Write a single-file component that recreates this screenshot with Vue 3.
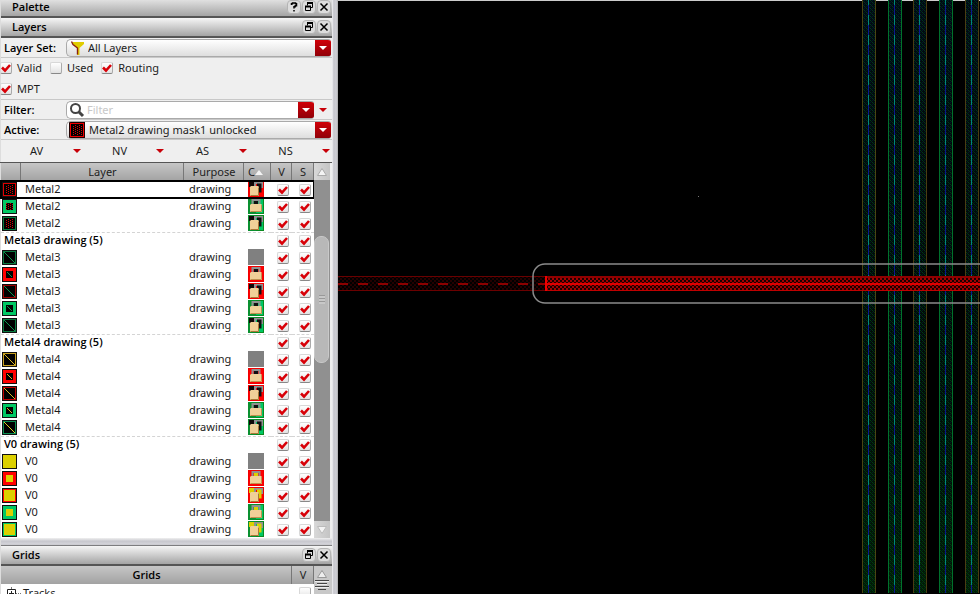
<script setup>
import { ref } from 'vue'

const RED = '#ff0000'
const GREEN = '#00c864'
const YELLOW = '#dcd000'

const filters = ref([
  { label: 'Valid', on: true },
  { label: 'Used', on: false },
  { label: 'Routing', on: true },
  { label: 'MPT', on: true }
])

const menus = ['AV', 'NV', 'AS', 'NS']

// frame: colour of the swatch frame, thick: wide frame, fill: dots, diag or solid
const rows = ref([
  { name: 'Metal2', frame: '#e00000', fill: 'dots', mask: RED, open: true, selected: true },
  { name: 'Metal2', frame: GREEN, thick: true, fill: 'dots', mask: GREEN },
  { name: 'Metal2', frame: '#0a7a40', fill: 'dots', mask: GREEN, open: true },
  { group: 'Metal3 drawing (5)' },
  { name: 'Metal3', frame: '#0a7a40', fill: 'diag', ink: '#0c9450' },
  { name: 'Metal3', frame: RED, thick: true, fill: 'diag', ink: '#0c9450', mask: RED },
  { name: 'Metal3', frame: '#a00000', fill: 'diag', ink: '#0c9450', mask: RED, open: true },
  { name: 'Metal3', frame: GREEN, thick: true, fill: 'diag', ink: '#0c9450', mask: GREEN },
  { name: 'Metal3', frame: '#0a7a40', fill: 'diag', ink: '#0c9450', mask: GREEN, open: true },
  { group: 'Metal4 drawing (5)' },
  { name: 'Metal4', frame: '#c8a020', fill: 'diag', ink: '#d8b828' },
  { name: 'Metal4', frame: RED, thick: true, fill: 'diag', ink: '#d8b828', mask: RED },
  { name: 'Metal4', frame: '#c00000', fill: 'diag', ink: '#d8b828', mask: RED, open: true },
  { name: 'Metal4', frame: GREEN, thick: true, fill: 'diag', ink: '#d8b828', mask: GREEN },
  { name: 'Metal4', frame: '#0a9050', fill: 'diag', ink: '#e0d020', mask: GREEN, open: true },
  { group: 'V0 drawing (5)' },
  { name: 'V0', frame: YELLOW, fill: 'solid', ink: YELLOW },
  { name: 'V0', frame: RED, thick: true, fill: 'solid', ink: YELLOW, mask: RED },
  { name: 'V0', frame: RED, fill: 'solid', ink: YELLOW, mask: RED, open: true },
  { name: 'V0', frame: GREEN, thick: true, fill: 'solid', ink: YELLOW, mask: GREEN },
  { name: 'V0', frame: GREEN, fill: 'solid', ink: YELLOW, mask: GREEN, open: true }
].map(r => ({ ...r, visible: true, selectable: true })))

const tracks = [
  { x: 524, edge: '#4a4412' },
  { x: 550, edge: '#00702c' },
  { x: 575, edge: '#4a3c12' },
  { x: 601, edge: '#00702c' },
  { x: 627, edge: '#4a3c12' }
]
</script>

<template>
  <div class="app">
    <svg class="defs" aria-hidden="true">
      <defs>
        <pattern id="swatch-dots" width="4" height="4" patternUnits="userSpaceOnUse">
          <path d="M0 0h1v1H0zM2 1h1v1H2zM0 2h1v1H0zM2 3h1v1H2z" fill="#d80000" />
        </pattern>
      </defs>
    </svg>

    <aside class="dock">
      <header class="title">
        <h2>Palette</h2>
        <button type="button" aria-label="Help">
          <svg viewBox="0 0 12 12"><path d="M3.500 4V2.800h1V2h3v.8h1v2H7.200v1H6V7.500M6 9v1.500" fill="none" stroke="#000" stroke-width="1.500" /></svg>
        </button>
        <button type="button" aria-label="Float">
          <svg viewBox="0 0 12 12"><path d="M4.500 4.500V2h5v4.500H8M2.500 5.500h5v4h-5z" fill="none" stroke="#000" /><path d="M4 1h6v2H4zM2 4.500h6v2H2z" /></svg>
        </button>
        <button type="button" aria-label="Close">
          <svg viewBox="0 0 12 12"><path d="M2.500 2.500l7 7M9.500 2.500l-7 7" stroke="#000" stroke-width="1.500" /></svg>
        </button>
      </header>

      <header class="title second">
        <h2>Layers</h2>
        <button type="button" aria-label="Float">
          <svg viewBox="0 0 12 12"><path d="M4.500 4.500V2h5v4.500H8M2.500 5.500h5v4h-5z" fill="none" stroke="#000" /><path d="M4 1h6v2H4zM2 4.500h6v2H2z" /></svg>
        </button>
        <button type="button" aria-label="Close">
          <svg viewBox="0 0 12 12"><path d="M2.500 2.500l7 7M9.500 2.500l-7 7" stroke="#000" stroke-width="1.500" /></svg>
        </button>
      </header>

      <div class="field">
        <label for="layer-set">Layer Set:</label>
        <div class="combo">
          <svg class="lead" viewBox="0 0 16 16"><path d="M3 2h12v2l-4.500 4v7H8V8L4 4z" fill="#e0cc00" /><path d="M2.500 1.500l1.500 3L8.500 8v6.500" fill="none" stroke="#8a2010" stroke-width="1.400" /></svg>
          <select id="layer-set"><option>All Layers</option></select>
          <span class="drop"></span>
        </div>
      </div>

      <div class="checks">
        <label v-for="f in filters" :key="f.label">
          <input v-model="f.on" type="checkbox" />{{ f.label }}
        </label>
      </div>

      <div class="field lined">
        <label for="filter">Filter:</label>
        <div class="combo search">
          <svg class="lead" viewBox="0 0 16 16"><circle cx="6.500" cy="6.500" r="4.500" fill="none" stroke="#444" stroke-width="2" /><path d="M9.500 9.500l4.500 4.500" stroke="#444" stroke-width="3" /></svg>
          <input id="filter" type="text" placeholder="Filter" />
          <button type="button" class="drop" aria-label="Filter history"></button>
        </div>
        <button type="button" class="more" aria-label="Filter options"><i class="tri"></i></button>
      </div>

      <div class="field">
        <label for="active">Active:</label>
        <div class="combo">
          <svg class="lead big" viewBox="0 0 16 16" shape-rendering="crispEdges"><rect width="16" height="16" fill="#200000" /><rect x="1" y="1" width="14" height="14" fill="#f00000" /><rect x="2" y="2" width="12" height="12" /><rect x="3" y="3" width="10" height="10" fill="url(#swatch-dots)" /></svg>
          <select id="active"><option>Metal2 drawing mask1 unlocked</option></select>
          <span class="drop"></span>
        </div>
      </div>

      <nav class="menus">
        <button v-for="m in menus" :key="m" type="button"><span>{{ m }}</span><i class="tri"></i></button>
      </nav>

      <section class="layers">
        <table>
          <colgroup>
            <col class="c-icon" /><col /><col class="c-purpose" /><col class="c-mask" /><col class="c-v" /><col class="c-s" />
          </colgroup>
          <thead>
            <tr>
              <th></th><th>Layer</th><th>Purpose</th>
              <th class="sorted"><span class="sort">C<svg viewBox="0 0 8 5"><path d="M0 5l4-5 4 5z" fill="#f4f4f4" /></svg></span></th>
              <th>V</th><th>S</th>
            </tr>
          </thead>
          <tbody>
            <tr v-for="(r, i) in rows" :key="i" :class="{ group: r.group, selected: r.selected }">
              <td v-if="r.group" colspan="4" class="group-name">{{ r.group }}</td>
              <template v-else>
                <td class="swatch">
                  <svg viewBox="0 0 15 15" shape-rendering="crispEdges">
                    <rect width="15" height="15" fill="#101010" />
                    <rect x="1" y="1" width="13" height="13" :fill="r.frame" />
                    <template v-if="r.thick">
                      <rect x="4" y="4" width="7" height="7" :fill="r.fill === 'solid' ? r.ink : '#000'" />
                      <rect v-if="r.fill === 'dots'" x="4" y="4" width="7" height="7" fill="url(#swatch-dots)" />
                      <path v-if="r.fill === 'diag'" d="M5 5l5 5" :stroke="r.ink" />
                    </template>
                    <template v-else>
                      <rect x="2" y="2" width="11" height="11" :fill="r.fill === 'solid' ? r.ink : '#000'" />
                      <rect v-if="r.fill === 'dots'" x="3" y="3" width="9" height="9" fill="url(#swatch-dots)" />
                      <path v-if="r.fill === 'diag'" d="M2 2l11 11" :stroke="r.ink" />
                    </template>
                  </svg>
                </td>
                <td class="name">{{ r.name }}</td>
                <td class="purpose">drawing</td>
                <td class="mask">
                  <svg viewBox="0 0 16 16">
                    <rect width="16" height="16" :fill="r.mask || '#808080'" />
                    <template v-if="r.mask">
                      <rect x="0.500" y="0.500" width="15" height="15" fill="none" :stroke="r.mask === '#ff0000' ? '#f00000' : '#0a8a20'" />
                      <rect v-if="r.mask !== '#ff0000'" width="8" height="16" fill="#0a9030" />
                      <template v-if="r.open">
                        <rect x="1" y="1" width="6" height="5" :fill="r.fill === 'solid' ? '#dcd000' : '#100808'" />
                        <path d="M7 6V2h7v5" fill="none" stroke="#909090" stroke-width="2" />
                        <path d="M9 4h3v6h-2" fill="none" :stroke="r.fill === 'solid' ? '#dcd000' : '#101010'" stroke-width="3" />
                        <path d="M2 6l1-1h7l1 1v9H2z" fill="#f0d098" />
                        <path d="M2.500 14.500h8v-8" fill="none" stroke="#a87838" />
                      </template>
                      <template v-else>
                        <path d="M4.500 7V2h7v5" fill="none" stroke="#909090" stroke-width="2" />
                        <rect x="6" y="3" width="4" height="3" :fill="r.fill === 'solid' ? '#dcd000' : '#101010'" />
                        <path d="M2 7l1-1h10l1 1v7H2z" fill="#f0d098" />
                        <path d="M2.500 13.500h11V7" fill="none" stroke="#c09050" />
                      </template>
                    </template>
                  </svg>
                </td>
              </template>
              <td class="tick"><input v-model="r.visible" type="checkbox" aria-label="Visible" /></td>
              <td class="tick"><input v-model="r.selectable" type="checkbox" aria-label="Selectable" /></td>
            </tr>
          </tbody>
        </table>
        <div class="scroll">
          <button type="button" aria-label="Scroll up"><svg viewBox="0 0 10 8"><path d="M.5 7.500L5 .5l4.500 7z" fill="#f4f4f4" stroke="#aaa" /></svg></button>
          <div class="rail"><div class="thumb"><i></i></div></div>
          <button type="button" aria-label="Scroll down"><svg viewBox="0 0 10 8"><path d="M.5.5h9L5 7.500z" fill="#f4f4f4" stroke="#bbb" /></svg></button>
        </div>
      </section>

      <div class="splitter"></div>

      <header class="title second">
        <h2>Grids</h2>
        <button type="button" aria-label="Float">
          <svg viewBox="0 0 12 12"><path d="M4.500 4.500V2h5v4.500H8M2.500 5.500h5v4h-5z" fill="none" stroke="#000" /><path d="M4 1h6v2H4zM2 4.500h6v2H2z" /></svg>
        </button>
        <button type="button" aria-label="Close">
          <svg viewBox="0 0 12 12"><path d="M2.500 2.500l7 7M9.500 2.500l-7 7" stroke="#000" stroke-width="1.500" /></svg>
        </button>
      </header>

      <section class="grids">
        <table>
          <colgroup><col /><col class="c-gv" /></colgroup>
          <thead><tr><th class="strong">Grids</th><th>V</th></tr></thead>
          <tbody>
            <tr>
              <td>
                <div class="node">
                  <svg viewBox="0 0 15 12"><path d="M5.500 0v2M10 6.500h1M12 6.500h1M14 6.500h1" stroke="#777" /><path d="M1.500 2.500h8v8h-8zM3 6.500h5M5.500 4v5" fill="none" stroke="#222" /></svg>
                  Tracks
                </div>
              </td>
              <td class="tick"><input type="checkbox" aria-label="Tracks visible" /></td>
            </tr>
          </tbody>
        </table>
        <div class="mini-scroll">
          <svg viewBox="0 0 16 28"><path d="M3.500 11.500L8 4.500l4.500 7z" fill="#eee" stroke="#999" /><path d="M1 14.500h14M3 17.500h10M1 20.500h14M4 23.500h8" stroke="#444" /><path d="M1 15.500h14M3 18.500h10M1 21.500h14" stroke="#eee" /></svg>
        </div>
      </section>
    </aside>

    <div class="sash"></div>

    <main class="canvas">
      <svg width="100%" height="100%" role="img" aria-label="Layout view">
        <defs>
          <pattern id="weave" width="4" height="4" patternUnits="userSpaceOnUse">
            <rect width="4" height="4" fill="#000806" />
            <path d="M0 0h1v1H0zM2 2h1v1H2z" fill="#003c14" />
            <path d="M2 0h1v1H2zM0 2h1v1H0z" fill="#001428" />
            <path d="M1 1h1v1H1zM3 3h1v1H3z" fill="#002c10" />
          </pattern>
          <linearGradient id="fade" x1="0" y1="0" x2="0" y2="1">
            <stop offset="0" stop-color="#001440" stop-opacity="0.2" />
            <stop offset="0.500" stop-color="#002010" stop-opacity="0.1" />
            <stop offset="1" stop-color="#004a00" stop-opacity="0.3" />
          </linearGradient>
          <pattern id="wire-dim" width="4" height="4" patternUnits="userSpaceOnUse">
            <path d="M0 0h2v2H0zM2 2h2v2H2z" fill="#240000" />
          </pattern>
          <pattern id="wire" width="4" height="4" patternUnits="userSpaceOnUse">
            <rect width="4" height="4" fill="#1c0000" />
            <path d="M0 0h2v2H0zM2 2h2v2H2z" fill="#a00000" />
          </pattern>
        </defs>
        <g shape-rendering="crispEdges">
          <g v-for="t in tracks" :key="t.x">
            <rect :x="t.x" y="0" width="14" height="100%" fill="url(#weave)" />
            <rect :x="t.x" y="0" width="14" height="100%" fill="url(#fade)" />
            <rect :x="t.x" y="0" width="1" height="100%" :fill="t.edge" />
            <rect :x="t.x + 13" y="0" width="1" height="100%" :fill="t.edge" />
            <line :x1="t.x + 6.5" :x2="t.x + 6.5" y1="0" y2="100%" stroke="#0a1890" />
            <line :x1="t.x + 6.5" :x2="t.x + 6.5" y1="0" y2="100%" stroke="#00877c" stroke-dasharray="10 10" stroke-dashoffset="5" />
          </g>
          <rect x="0" y="276" width="207" height="15" fill="url(#wire-dim)" />
          <path d="M0 276.500h207M0 290.500h207" stroke="#6a0000" />
          <path d="M0 284h207" stroke="#8c0000" stroke-width="2" stroke-dasharray="10 10" />
          <rect x="207" y="276" width="100%" height="15" fill="url(#wire)" />
          <rect x="207" y="276" width="100%" height="2" fill="#900000" />
          <rect x="207" y="290" width="100%" height="1" fill="#c00000" />
          <rect x="207" y="283" width="100%" height="2" fill="#e00000" />
          <rect x="207" y="276" width="2" height="15" fill="#f00000" />
          <rect x="360" y="196" width="1" height="1" fill="#777" />
        </g>
        <rect x="195" y="264" width="110%" height="39" rx="12" fill="none" stroke="#8a8a8a" stroke-width="1.500" />
      </svg>
    </main>
  </div>
</template>

<style>
body { background: #000; }
</style>

<style scoped>
.app {
  display: flex;
  height: 100vh;
  overflow: hidden;
  background: #000;
  font: 11px/16px "Noto Sans", "Open Sans", sans-serif;
  color: #1c1c1c;
}
* { box-sizing: border-box; }
.defs { position: absolute; width: 0; height: 0; }
button, input, select { font: inherit; color: inherit; margin: 0; }
button { padding: 0; border: 0; background: none; }
.dock { flex: none; width: 332px; background: #efefef; border-left: 1px solid #ddd; }
.sash { flex: none; width: 6px; background: linear-gradient(90deg, #f2f2f4, #c6c6cc 30%, #d0d0d6 70%, #aaa); }
.canvas { flex: 1; min-width: 0; border-top: 1px solid #ccc; }
.canvas svg { display: block; margin-top: -1px; }

.title {
  display: flex;
  align-items: center;
  gap: 1px;
  height: 18px;
  padding: 0 1px 2px 11px;
  background: linear-gradient(#e0e0e0, #a4a4a4);
  border-bottom: 2px solid #555;
}
.title.second { height: 20px; padding-bottom: 0; background: linear-gradient(#f6f6f6, #a4a4a4); }
.title h2, .field label, .layers .group-name, .grids .strong {
  font-family: "Open Sans", "Noto Sans", sans-serif;
  font-weight: 600;
  color: #000;
}
.title h2 { flex: 1; margin: 0; font-size: 11px; line-height: 16px; }
.title button {
  display: flex;
  align-items: center;
  justify-content: center;
  width: 14px;
  height: 14px;
  border: 1px solid #b4b4b4;
  border-radius: 4px;
  background: #dcdcdc;
}
.title svg { width: 12px; height: 12px; flex: none; }

.field {
  display: flex;
  align-items: center;
  height: 20px;
  padding-right: 1px;
  border-bottom: 1px solid #c8c8c8;
}
.field.lined { height: 21px; border-top: 1px solid #c8c8c8; }
.field label { flex: none; width: 65px; padding-left: 3px; }
.combo {
  position: relative;
  display: flex;
  flex: 1;
  height: 18px;
  border: 1px solid #aaa;
  border-right: 0;
  border-radius: 5px 3px 3px 5px;
  background: linear-gradient(#fff, #dedede);
  overflow: hidden;
}
.combo.search { background: #fff; }
.combo select, .combo input {
  flex: 1;
  min-width: 0;
  padding: 0 0 0 20px;
  border: 0;
  outline: 0;
  background: none;
  appearance: none;
}
.combo select { padding-left: 21px; }
.combo .big ~ select { padding-left: 22px; }
.combo input::placeholder { color: #c8c8c8; opacity: 1; }
.lead { position: absolute; left: 2px; top: 0; width: 16px; height: 16px; }
.drop {
  flex: none;
  display: flex;
  align-items: center;
  justify-content: center;
  width: 16px;
  background: linear-gradient(#d00008, #900008);
  pointer-events: none;
}
.drop::before {
  content: "";
  border: 4px solid transparent;
  border-top-color: #fff;
  border-bottom: 0;
}
.more { width: 17px; display: flex; justify-content: center; }
.tri { border: 4px solid transparent; border-top: 4px solid #c80008; border-bottom: 0; }

input[type="checkbox"] {
  appearance: none;
  display: block;
  flex: none;
  width: 12px;
  height: 12px;
  border: 1px solid #d8d8d8;
  border-bottom-color: #888;
  border-right-color: #aaa;
  border-radius: 2px;
  background: linear-gradient(#fff, #e2e2e2);
}
input[type="checkbox"]:checked {
  background: url("data:image/svg+xml,%3Csvg xmlns='http://www.w3.org/2000/svg' viewBox='0 0 10 10'%3E%3Cpath d='M1 4.500l3 3 5-5.500' fill='none' stroke='%23d80008' stroke-width='2.600'/%3E%3C/svg%3E") center / 10px 10px no-repeat, linear-gradient(#fff, #e2e2e2);
}
.checks { display: flex; flex-wrap: wrap; align-content: flex-start; gap: 1px 8px; height: 41px; padding-right: 140px; }
.checks label { display: flex; align-items: center; gap: 5px; height: 20px; }
.checks label:first-child, .checks label:last-child { margin-left: -1px; }

.menus { display: grid; grid-template-columns: repeat(4, 1fr); height: 23px; margin-left: -1px; border-bottom: 1px solid #555; }
.menus button { display: flex; align-items: center; padding-right: 2px; }
.menus span { flex: 1; text-align: center; }

.layers { display: flex; height: 375px; background: #fff; }
table { border-collapse: separate; border-spacing: 0; table-layout: fixed; }
.layers table { flex: 1; width: 0; height: 375px; }
td, th { padding: 0; font-weight: 400; }
.c-icon { width: 20px; }
.c-purpose { width: 60px; }
.c-mask { width: 27px; }
.c-v { width: 21px; }
.c-s { width: 22px; }
th {
  height: 18px;
  background: linear-gradient(#c6c6c6, #a2a2a2);
  box-shadow: inset -1px 0 #777;
  color: #222;
  text-align: center;
}
.sorted { padding-right: 4px; }
.layers td { height: 17px; line-height: 16px; vertical-align: top; }
.sort { display: inline-flex; align-items: center; }
.sort svg { width: 8px; height: 5px; }
.layers .group td { border-top: 1px dashed #d4d4d4; line-height: 14px; }
.group-name { padding-left: 3px; }
.selected { outline: 2px solid #000; outline-offset: -1px; }
.name { padding-left: 4px; }
.purpose { padding-left: 5px; }
.mask { padding-left: 4px; }
.swatch svg { display: block; width: 15px; height: 15px; margin: 1px 0 0 1px; }
.mask svg { display: block; width: 16px; height: 16px; }
.tick input { margin: 3px 0 0 6px; }
.tick + .tick input { margin-left: 7px; }
.group .tick input { margin-top: 2px; }

.scroll { flex: none; width: 18px; display: flex; flex-direction: column; background: #909090; border-right: 2px solid #efefef; }
.scroll button {
  display: flex;
  align-items: center;
  justify-content: center;
  height: 17px;
  background: linear-gradient(90deg, #d8d8d8, #c4c4c4);
}
.scroll svg { width: 10px; height: 8px; }
.rail { flex: 1; padding-top: 56px; }
.thumb {
  display: flex;
  align-items: center;
  justify-content: center;
  width: 15px;
  height: 127px;
  border: 1px solid #c8c8c8;
  border-radius: 7px;
  background: #b8b8b8;
}
.thumb i { width: 6px; height: 9px; background: repeating-linear-gradient(#999 0 1px, #c8c8c8 1px 3px); }

.splitter { height: 8px; background: linear-gradient(#f0f0f0, #c8c8ce 40%, #d4d4da 80%, #555); }
.grids { display: flex; background: #fff; }
.grids table { flex: 1; width: 0; }
.c-gv { width: 22px; }
.node { display: flex; align-items: center; gap: 2px; height: 18px; padding-left: 5px; }
.node svg { width: 15px; height: 12px; }
.grids .tick input { margin: 0 0 0 7px; }
.mini-scroll { flex: none; width: 18px; background: #c8c8c8; }
.mini-scroll svg { display: block; width: 16px; height: 28px; }
</style>
